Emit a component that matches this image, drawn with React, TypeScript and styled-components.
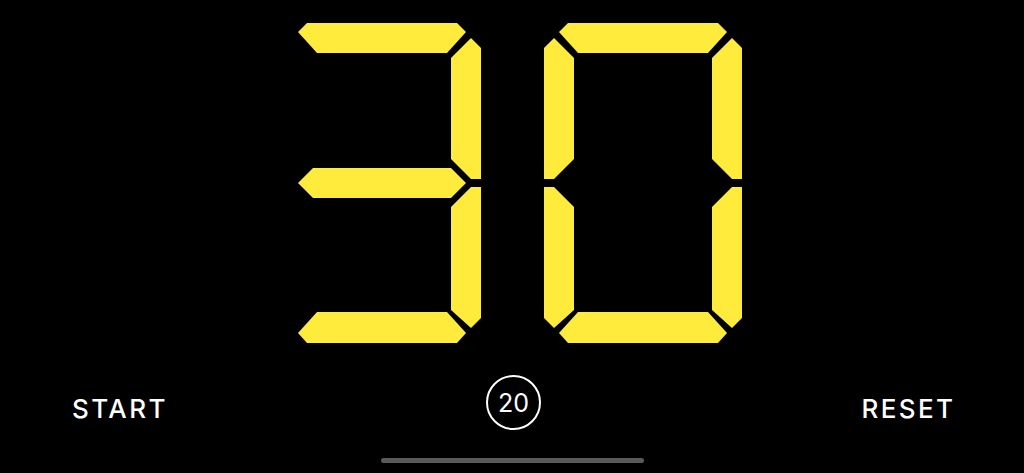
import React from "react";
import styled, { createGlobalStyle } from "styled-components";

const GlobalStyle = createGlobalStyle`
  html, body {
    margin: 0;
    padding: 0;
    background: #000;
    overflow: hidden;
  }
  * { box-sizing: border-box; }
`;

type SegKey = "a" | "b" | "c" | "d" | "e" | "f" | "g";

// Polygon outlines for each segment in a 198 x 320 cell
const SEGMENTS: Record<SegKey, string> = {
  a: "24,0 174,0 183,9 164,30 34,30 15,9",
  b: "188,15 198,25 198,156 188,156 168,136 168,35",
  c: "188,164 198,164 198,295 188,305 168,287 168,184",
  d: "34,289 164,289 183,310 174,320 24,320 15,310",
  e: "0,164 10,164 30,184 30,287 10,305 0,295",
  f: "10,15 30,35 30,136 10,156 0,156 0,25",
  g: "30,145 168,145 183,160 168,175 30,175 15,160",
};

const DIGIT_MAP: Record<string, SegKey[]> = {
  "0": ["a", "b", "c", "d", "e", "f"],
  "1": ["b", "c"],
  "2": ["a", "b", "g", "e", "d"],
  "3": ["a", "b", "g", "c", "d"],
  "4": ["f", "g", "b", "c"],
  "5": ["a", "f", "g", "c", "d"],
  "6": ["a", "f", "g", "e", "c", "d"],
  "7": ["a", "b", "c"],
  "8": ["a", "b", "c", "d", "e", "f", "g"],
  "9": ["a", "b", "c", "d", "f", "g"],
};

const Screen = styled.div`
  width: 100vw;
  height: 100vh;
  background: #000;
  display: flex;
  flex-direction: column;
  align-items: center;
  padding-top: 23px;
  font-family: Inter, "Liberation Sans", Arial, sans-serif;
  color: #fff;
`;

const Display = styled.div`
  display: flex;
  gap: 63px;
  height: 320px;
`;

const DigitSvg = styled.svg`
  width: 198px;
  height: 320px;
  display: block;
`;

const Segment = styled.polygon`
  fill: #ffeb3b;
`;

const Controls = styled.div`
  width: 100%;
  margin-top: 32px;
  height: 55px;
  padding: 0 71px 0 72px;
  display: grid;
  grid-template-columns: 1fr auto 1fr;
  align-items: start;
`;

const TextButton = styled.button<{ $side: "left" | "right" }>`
  justify-self: ${(p) => (p.$side === "left" ? "start" : "end")};
  margin-top: 21px;
  margin-right: ${(p) => (p.$side === "right" ? "-2.4px" : "0")};
  padding: 0;
  background: none;
  border: none;
  color: #fff;
  font-family: inherit;
  font-size: 26px;
  font-weight: 500;
  letter-spacing: 2.4px;
  line-height: 26px;
  cursor: pointer;
`;

const RoundBadge = styled.button`
  width: 55px;
  height: 55px;
  margin-left: 2px;
  border-radius: 50%;
  border: 2px solid #fff;
  background: transparent;
  color: #fff;
  font-family: inherit;
  font-size: 25px;
  font-weight: 400;
  display: flex;
  align-items: center;
  justify-content: center;
  padding: 0;
`;

const HomeBar = styled.div`
  margin-top: 28px;
  width: 263px;
  height: 5px;
  border-radius: 3px;
  background: #5a5a5a;
`;

const Digit: React.FC<{ value: string }> = ({ value }) => {
  const lit = DIGIT_MAP[value] ?? [];
  return (
    <DigitSvg viewBox="0 0 198 320">
      {lit.map((k) => (
        <Segment key={k} points={SEGMENTS[k]} />
      ))}
    </DigitSvg>
  );
};

export default function App() {
  const count = "30";
  return (
    <>
      <GlobalStyle />
      <Screen>
        <Display>
          {count.split("").map((ch, i) => (
            <Digit key={i} value={ch} />
          ))}
        </Display>
        <Controls>
          <TextButton $side="left">START</TextButton>
          <RoundBadge>20</RoundBadge>
          <TextButton $side="right">RESET</TextButton>
        </Controls>
        <HomeBar />
      </Screen>
    </>
  );
}
